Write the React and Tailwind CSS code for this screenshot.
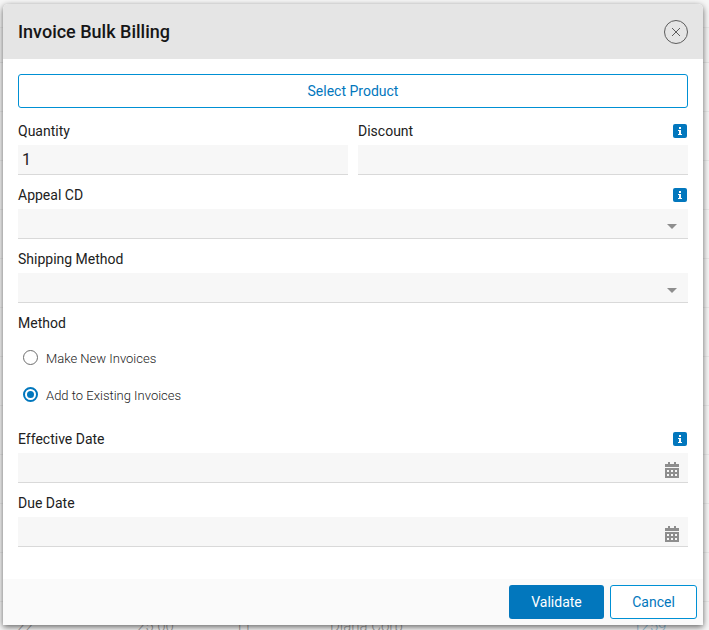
import { useState } from "react";

const rowCount = 12;

function Backdrop() {
  return (
    <div aria-hidden="true" className="absolute inset-0 overflow-hidden text-[15px] font-light text-[#9a9a9a]">
      <div className="h-7 border-b border-[#e9e9e9]" />
      <div className="h-[35px] border-b border-[#e4e4e4] bg-[#f3f3f3]" />
      {Array.from({ length: rowCount }, (_, i) => (
        <div key={i} className="flex h-[49px] items-center border-b border-[#e9e9e9] pt-0.5 pl-[17px]">
          {i === rowCount - 1 && (
            <>
              <span className="w-[120px]">22</span>
              <span className="w-[98px]">25.00</span>
              <span className="w-[95px]">11</span>
              <span className="grow">Diana Corp</span>
              <span className="w-[76px] text-[#8fc0db]">1259</span>
            </>
          )}
        </div>
      ))}
    </div>
  );
}

function InfoButton({ label }) {
  return (
    <button type="button" aria-label={label} className="mr-px size-3.5">
      <svg viewBox="0 0 14 14" className="block size-3.5" shapeRendering="crispEdges">
        <rect width="14" height="14" rx="2" fill="#0277bd" shapeRendering="auto" />
        <path d="M6 3h2v2H6zM5 6h3v4h1v1H5v-1h1V7H5z" fill="#fff" />
      </svg>
    </button>
  );
}

function Field({ id, label, info, children }) {
  return (
    <div className="min-w-0 flex-1">
      <div className="mb-1 flex h-5 items-center justify-between">
        <label htmlFor={id}>{label}</label>
        {info && <InfoButton label={`About ${label}`} />}
      </div>
      <div className="relative">{children}</div>
    </div>
  );
}

const control =
  "block h-[30px] w-full appearance-none border-b border-[#d9d9d9] bg-[#f7f7f7] px-1 text-base text-[#212121] outline-none";

function SelectField({ id, label, info }) {
  return (
    <Field id={id} label={label} info={info}>
      <select id={id} className={control} defaultValue="">
        <option value=""></option>
      </select>
      <svg viewBox="0 0 10 5" className="pointer-events-none absolute top-[15px] right-[11px] h-[5px] w-2.5">
        <path d="M0 0h10L5 5z" fill="#8e8e8e" />
      </svg>
    </Field>
  );
}

function DateField({ id, label, info }) {
  return (
    <Field id={id} label={label} info={info}>
      <input id={id} type="text" className={control} />
      <button type="button" aria-label={`Choose ${label}`} className="absolute top-[9px] right-[9px]">
        <svg viewBox="0 0 14 16" className="block h-4 w-3.5" shapeRendering="crispEdges" fill="#8e8e8e">
          <path d="M3 0h2v2h4V0h2v2h3v3H0V2h3z" />
          <path
            fillRule="evenodd"
            d="M0 6h14v10H0zM2 8v2h2V8zM6 8v2h2V8zM10 8v2h2V8zM2 12v2h2v-2zM6 12v2h2v-2zM10 12v2h2v-2z"
          />
        </svg>
      </button>
    </Field>
  );
}

function RadioOption({ value, selected, onSelect, children }) {
  return (
    <label className="flex h-[37px] items-center gap-2 pl-[5px] text-[13px] font-light text-[#212121]">
      <input
        type="radio"
        name="method"
        value={value}
        checked={selected === value}
        onChange={() => onSelect(value)}
        className="size-[15px] appearance-none rounded-full border border-[#6e6e6e] bg-white checked:border-2 checked:border-[#0277bd] checked:bg-[#0277bd] checked:bg-clip-content checked:p-[2px]"
      />
      <span className="pt-[3px]">{children}</span>
    </label>
  );
}

export default function App() {
  const [method, setMethod] = useState("existing");
  return (
    <div className="relative min-h-screen bg-[#f6f6f6] pt-1 pr-1.5 pb-[5px] pl-[3px] font-['Roboto','Liberation_Sans',sans-serif] text-sm text-[#212121]">
      <Backdrop />
      <section
        role="dialog"
        aria-labelledby="dialog-title"
        className="relative overflow-hidden rounded-t-[5px] bg-white shadow-[0_2px_6px_rgba(0,0,0,0.6)]"
      >
        <header className="flex h-[55px] items-center justify-between bg-[#e5e5e5] px-[15px]">
          <h1 id="dialog-title" className="text-lg font-medium text-[#161616]">Invoice Bulk Billing</h1>
          <button type="button" aria-label="Close">
            <svg viewBox="0 0 24 24" className="block size-6" fill="none" stroke="#5c5c5c">
              <circle cx="12" cy="12" r="11.5" />
              <path d="M8 8l8 8M16 8l-8 8" />
            </svg>
          </button>
        </header>

        <form id="billing" className="px-[15px] pt-[15px] pb-8">
          <button
            type="button"
            className="h-[34px] w-full rounded-[3px] border border-[#0090d4] bg-white text-[#0277bd]"
          >
            Select Product
          </button>
          <div className="mt-[13px] flex flex-col gap-2.5">
            <div className="flex gap-2.5">
              <Field id="quantity" label="Quantity">
                <input id="quantity" type="text" defaultValue="1" className={control} />
              </Field>
              <Field id="discount" label="Discount" info>
                <input id="discount" type="text" className={control} />
              </Field>
            </div>
            <SelectField id="appeal" label="Appeal CD" info />
            <SelectField id="shipping" label="Shipping Method" />
            <fieldset className="mb-1.5">
              <legend className="mb-1.5 h-5">Method</legend>
              <RadioOption value="new" selected={method} onSelect={setMethod}>
                Make New Invoices
              </RadioOption>
              <RadioOption value="existing" selected={method} onSelect={setMethod}>
                Add to Existing Invoices
              </RadioOption>
            </fieldset>
            <DateField id="effective" label="Effective Date" info />
            <DateField id="due" label="Due Date" />
          </div>
        </form>

        <footer className="flex h-[46px] items-center justify-end gap-1.5 bg-[#fafafa] px-1.5">
          <button
            type="submit"
            form="billing"
            className="h-[34px] min-w-[95px] rounded-[3px] bg-[#0277bd] px-5 text-white"
          >
            Validate
          </button>
          <button
            type="button"
            className="h-[34px] min-w-[87px] rounded-[3px] border border-[#0090d4] bg-white px-5 text-[#0277bd]"
          >
            Cancel
          </button>
        </footer>
      </section>
    </div>
  );
}
